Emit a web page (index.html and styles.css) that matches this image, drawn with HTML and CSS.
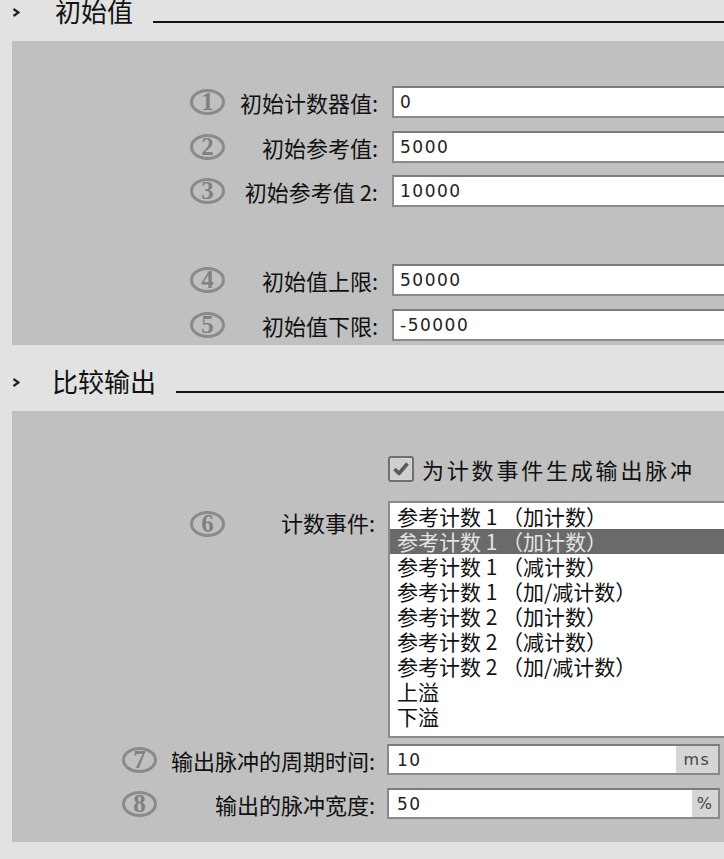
FILE: index.html
```html
<!DOCTYPE html>
<html lang="zh-CN">
<head>
<meta charset="utf-8">
<title>初始值 / 比较输出</title>
<link rel="stylesheet" href="styles.css">
</head>
<body>
<div class="page">
  <div class="head">
    <svg class="chev" viewBox="0 0 8 9"><polyline points="1.5,1 6.5,4.5 1.5,8" fill="none" stroke="#222" stroke-width="2.2"/></svg>
    <span class="title">初始值</span>
    <span class="rule"></span>
  </div>
  <div class="panel panel-init">
    <div class="row">
      <div class="lab"><span class="num">1</span><span class="txt">初始计数器值:</span></div>
      <div class="field"><span class="val">0</span></div>
    </div>
    <div class="row">
      <div class="lab"><span class="num">2</span><span class="txt">初始参考值:</span></div>
      <div class="field"><span class="val">5000</span></div>
    </div>
    <div class="row">
      <div class="lab"><span class="num">3</span><span class="txt">初始参考值 2:</span></div>
      <div class="field"><span class="val">10000</span></div>
    </div>
    <div class="row spacer"></div>
    <div class="row">
      <div class="lab"><span class="num">4</span><span class="txt">初始值上限:</span></div>
      <div class="field"><span class="val">50000</span></div>
    </div>
    <div class="row">
      <div class="lab"><span class="num">5</span><span class="txt">初始值下限:</span></div>
      <div class="field"><span class="val">-50000</span></div>
    </div>
  </div>

  <div class="head">
    <svg class="chev" viewBox="0 0 8 9"><polyline points="1.5,1 6.5,4.5 1.5,8" fill="none" stroke="#222" stroke-width="2.2"/></svg>
    <span class="title title-2">比较输出</span>
    <span class="rule"></span>
  </div>
  <div class="panel panel-out">
    <div class="check-row">
      <svg class="cbox" viewBox="0 0 26 26">
        <rect x="1" y="1" width="24" height="24" rx="2" fill="#d6d6d6" stroke="#6f6f6f" stroke-width="2"/>
        <rect x="3" y="3" width="20" height="20" fill="#cfcfcf"/>
        <path d="M6.5 13 L11 17.5 L19.5 7.5" fill="none" stroke="#5a5a5a" stroke-width="3.6" stroke-linejoin="round"/>
      </svg>
      <span class="check-label">为计数事件生成输出脉冲</span>
    </div>
    <div class="list-row">
      <div class="lab lab2 lab-top"><span class="num">6</span><span class="txt">计数事件:</span></div>
      <div class="list">
        <div class="item">参考计数 1 （加计数）</div>
        <div class="item sel">参考计数 1 （加计数）</div>
        <div class="item">参考计数 1 （减计数）</div>
        <div class="item">参考计数 1 （加/减计数）</div>
        <div class="item">参考计数 2 （加计数）</div>
        <div class="item">参考计数 2 （减计数）</div>
        <div class="item">参考计数 2 （加/减计数）</div>
        <div class="item">上溢</div>
        <div class="item">下溢</div>
      </div>
    </div>
    <div class="row row7">
      <div class="lab lab2"><span class="num num-wide">7</span><span class="txt">输出脉冲的周期时间:</span></div>
      <div class="field field-unit"><span class="val">10</span><span class="unit unit-ms">ms</span></div>
    </div>
    <div class="row row8">
      <div class="lab lab2"><span class="num num-wide">8</span><span class="txt">输出的脉冲宽度:</span></div>
      <div class="field field-unit"><span class="val">50</span><span class="unit unit-pct">%</span></div>
    </div>
  </div>
</div>
</body>
</html>
```
FILE: styles.css
```css
html, body {
  margin: 0;
  padding: 0;
}
body {
  background: #e2e2e2;
  font-family: "Noto Sans CJK SC", "Noto Sans", sans-serif;
  color: #111;
  width: 724px;
  height: 859px;
  overflow: hidden;
}
.page {
  margin-top: -25px;
}
.head {
  display: flex;
  align-items: flex-start;
  height: 66px;
}
.chev {
  flex: none;
  width: 8px;
  height: 9px;
  margin: 33px 0 0 12px;
}
.title {
  font-size: 26px;
  line-height: 30px;
  margin: 21px 0 0 35px;
  white-space: nowrap;
}
.title-2 {
  margin-left: 32px;
}
.rule {
  flex: 1;
  height: 2px;
  background: #111;
  margin: 46px 0 0 20px;
}
.panel {
  margin-left: 12px;
  background: #c0c0c0;
  overflow: hidden;
  box-sizing: border-box;
}
.panel-init {
  height: 304px;
  padding-top: 45px;
  display: flex;
  flex-direction: column;
  gap: 12.5px;
}
.row {
  display: flex;
  align-items: center;
  height: 32px;
  flex: none;
}
.lab {
  flex: none;
  width: 366px;
  height: 32px;
  display: flex;
  align-items: center;
}
.lab2 {
  width: 363px;
}
.num {
  flex: none;
  width: 35px;
  height: 26px;
  box-sizing: border-box;
  margin-left: 178px;
  border: 3px solid #8a8a8a;
  border-radius: 50%;
  display: flex;
  align-items: center;
  justify-content: center;
  font-family: "Liberation Serif", serif;
  font-weight: bold;
  font-size: 25px;
  line-height: 20px;
  color: #808080;
}
.num-wide {
  margin-left: 110px;
}
.txt {
  flex: 1;
  text-align: right;
  font-size: 22px;
  line-height: 30px;
  white-space: nowrap;
}
.field {
  flex: none;
  margin-left: 14px;
  width: 360px;
  height: 32px;
  box-sizing: border-box;
  border: 2px solid #8a8a8a;
  border-top-color: #7c7c7c;
  background: #fff;
  display: flex;
  align-items: center;
}
.val {
  padding-left: 6px;
  font-family: "DejaVu Sans", sans-serif;
  font-size: 17px;
  letter-spacing: 1.5px;
  color: #222;
}
.panel-out {
  height: 431px;
  padding-top: 44px;
}
.check-row {
  display: flex;
  align-items: center;
  height: 27px;
  margin-left: 376px;
}
.cbox {
  flex: none;
  width: 26px;
  height: 26px;
}
.check-label {
  margin-left: 8px;
  font-size: 22px;
  letter-spacing: 2.8px;
  line-height: 30px;
  white-space: nowrap;
}
.list-row {
  display: flex;
  align-items: flex-start;
  margin-top: 19px;
}
.lab-top {
  margin-top: 2px;
  height: 34px;
  align-items: flex-end;
}
.list {
  flex: none;
  margin-left: 13px;
  width: 360px;
  height: 237px;
  box-sizing: border-box;
  border: 2px solid #8a8a8a;
  background: #fff;
  padding-top: 1px;
}
.item {
  height: 25px;
  line-height: 25px;
  font-size: 21px;
  padding-left: 7px;
  white-space: nowrap;
  color: #111;
}
.item.sel {
  background: #6a6a6a;
  color: #e4e4e4;
}
.row7 {
  margin-top: 6px;
  height: 31px;
}
.row8 {
  margin-top: 13px;
  height: 31px;
}
.row7 .lab, .row8 .lab {
  height: 31px;
}
.field-unit {
  margin-left: 12px;
  width: 333px;
  height: 31px;
}
.field-unit .val {
  padding-left: 8px;
}
.unit {
  margin-left: auto;
  align-self: stretch;
  background: #d5d5d5;
  display: flex;
  align-items: center;
  justify-content: center;
  font-family: "DejaVu Sans", sans-serif;
  font-size: 16px;
  letter-spacing: 1.5px;
  color: #444;
}
.unit-ms {
  width: 42px;
}
.unit-pct {
  width: 26px;
}
```
